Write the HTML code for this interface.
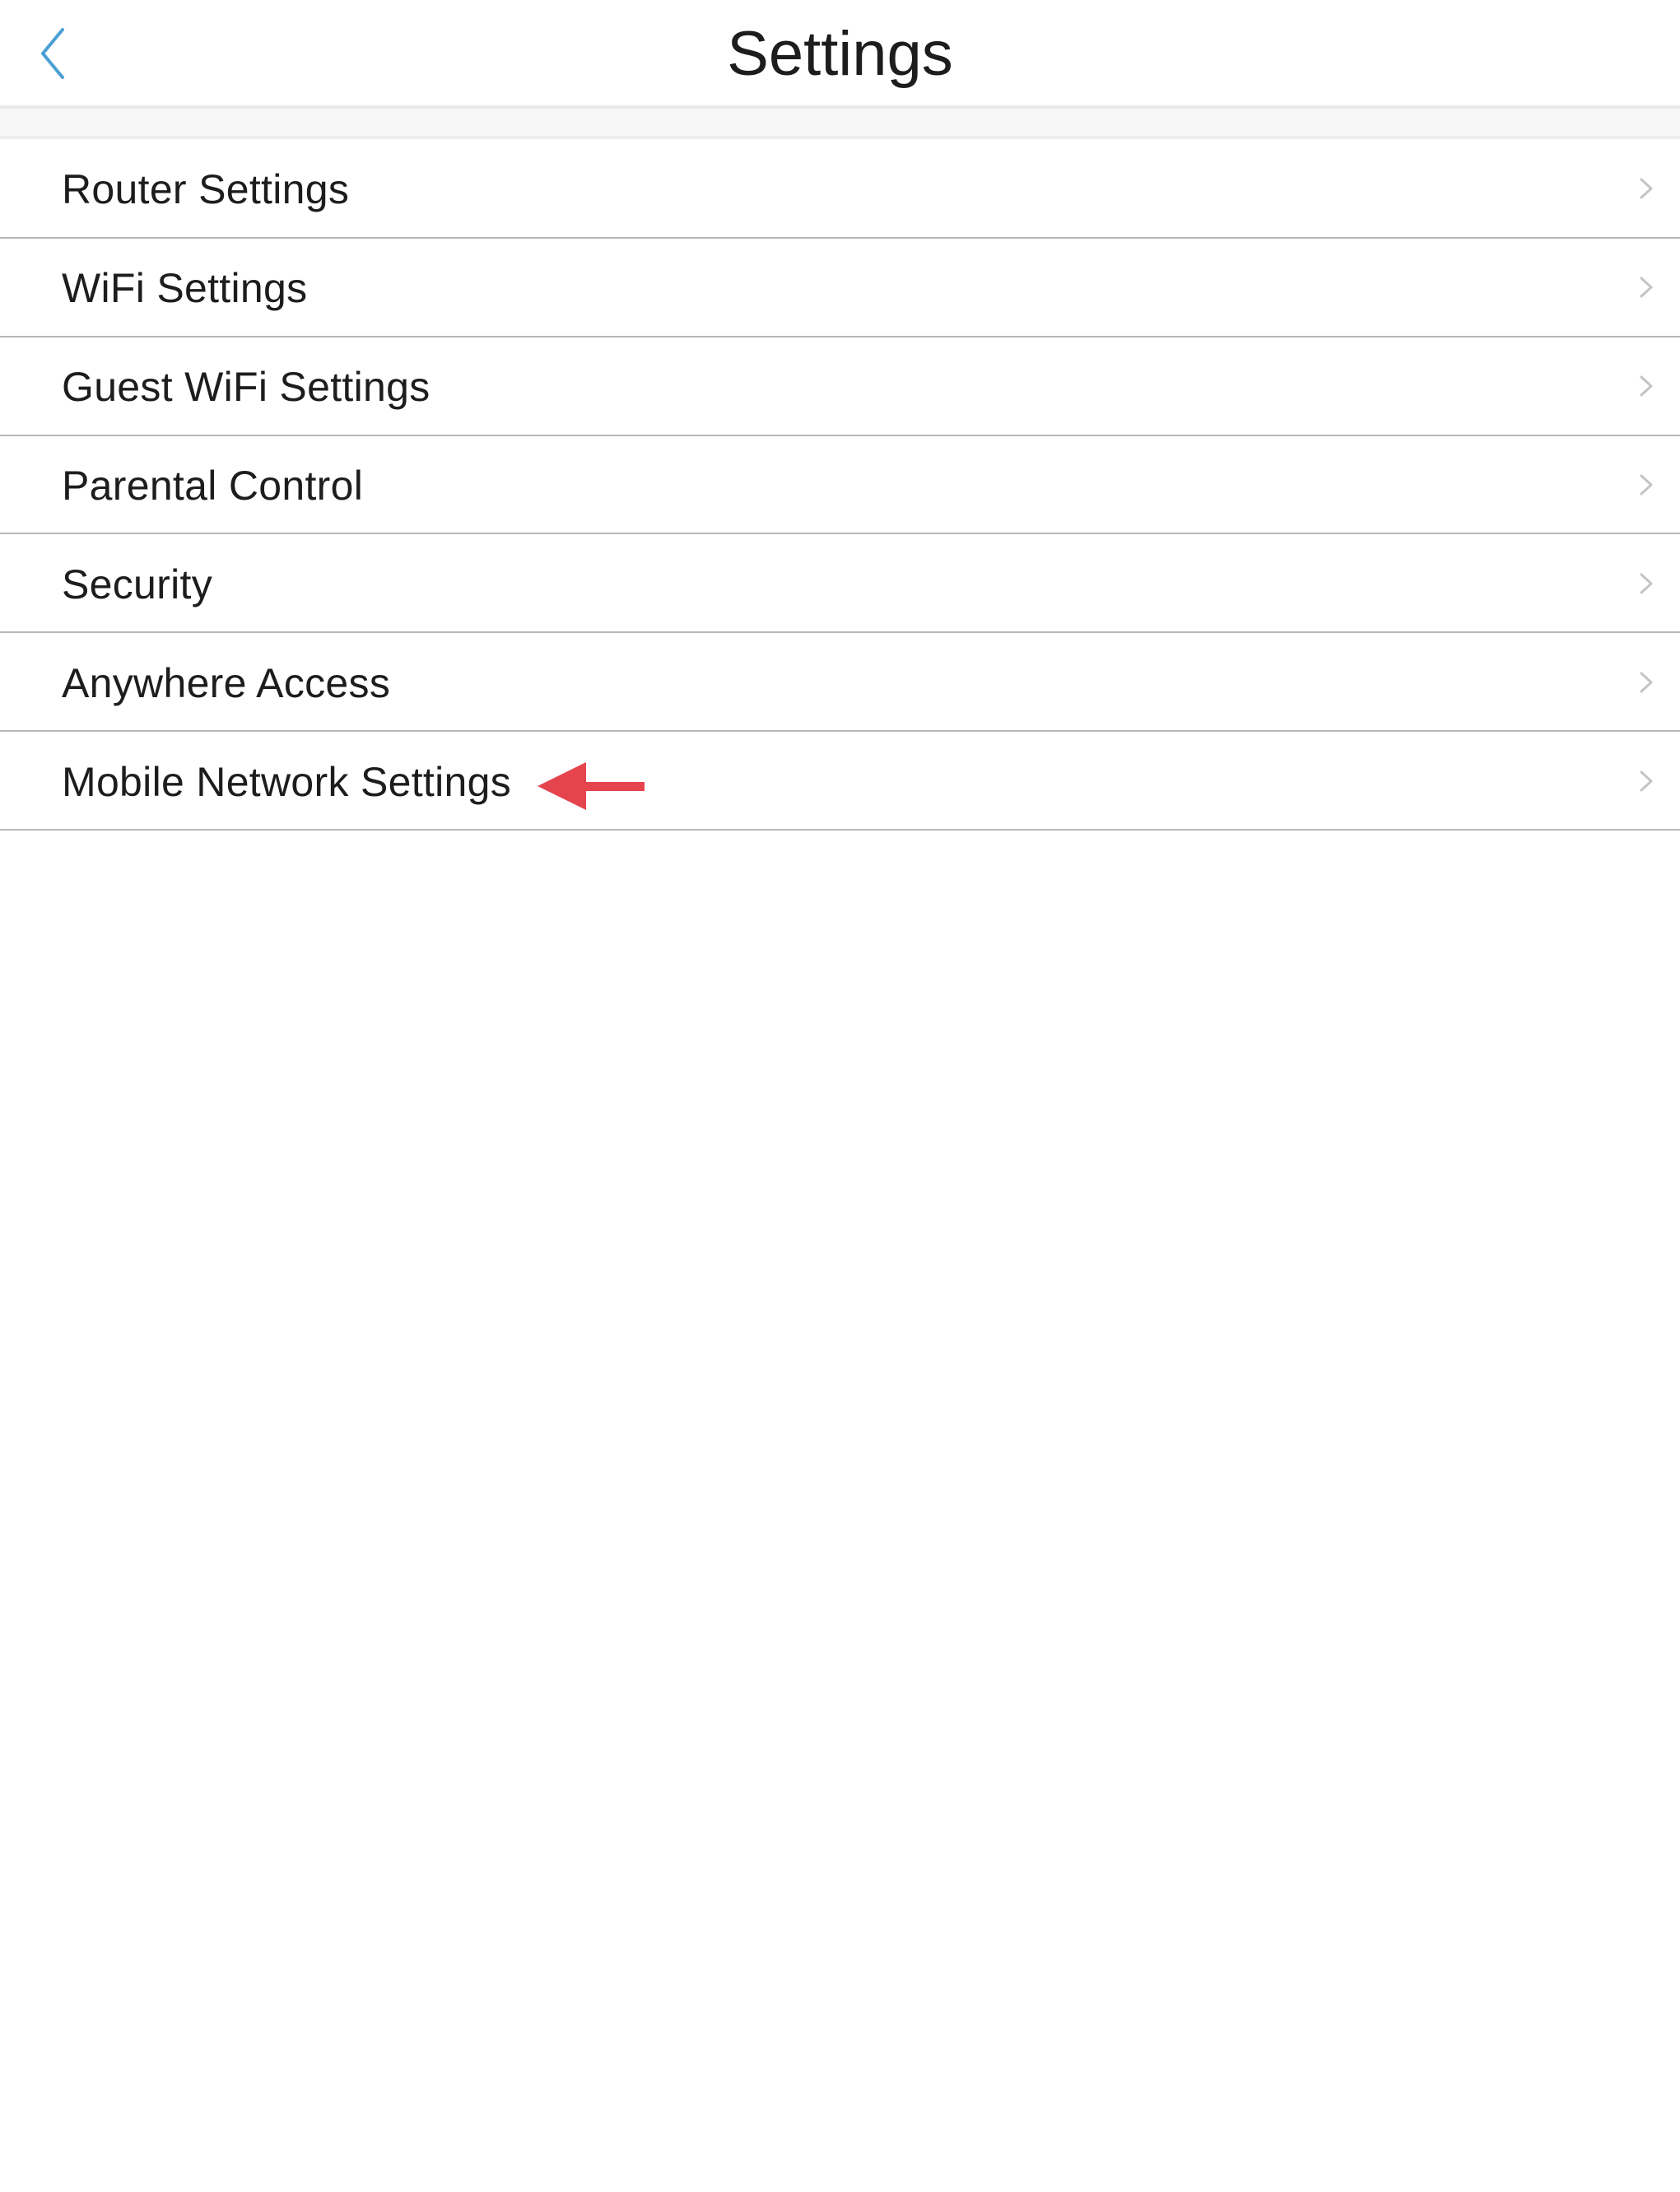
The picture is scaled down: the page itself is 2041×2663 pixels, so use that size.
<!DOCTYPE html>
<html><head><meta charset="utf-8"><style>
body{margin:0;width:2041px;height:2663px;background:#fff;position:relative;font-family:"Liberation Sans",sans-serif;color:#1d1d1f;overflow:hidden}
.t{position:absolute;white-space:nowrap}
.line{position:absolute;left:0;width:2041px;height:2px;background:#b8b8b8}
.row{position:absolute;left:75px;font-size:50px;line-height:50px;letter-spacing:0.3px}
</style></head><body>
<div class="t" style="left:0;width:2041px;text-align:center;top:28px;font-size:76px;line-height:76px">Settings</div>
<svg style="position:absolute;left:44px;top:30px" width="46" height="70"><polyline points="32,6 8,35 32,64" fill="none" stroke="#4a9fd4" stroke-width="4" stroke-linecap="round" stroke-linejoin="round"/></svg>
<div style="position:absolute;left:0;top:128px;width:2041px;height:4px;background:#e9e9eb"></div>
<div style="position:absolute;left:0;top:132px;width:2041px;height:33px;background:#f7f7f8"></div>
<div style="position:absolute;left:0;top:165px;width:2041px;height:4px;background:#ececee"></div>
<div class="line" style="top:288px"></div>
<div class="line" style="top:408px"></div>
<div class="line" style="top:528px"></div>
<div class="line" style="top:647px"></div>
<div class="line" style="top:767px"></div>
<div class="line" style="top:887px"></div>
<div class="line" style="top:1007px"></div>
<div class="row t" style="top:205px">Router Settings</div>
<div class="row t" style="top:325px">WiFi Settings</div>
<div class="row t" style="top:445px">Guest WiFi Settings</div>
<div class="row t" style="top:565px">Parental Control</div>
<div class="row t" style="top:685px">Security</div>
<div class="row t" style="top:805px">Anywhere Access</div>
<div class="row t" style="top:925px">Mobile Network Settings</div>
<svg style="position:absolute;left:0;top:0" width="2041" height="1100">
<g fill="none" stroke="#c4c4c6" stroke-width="3" stroke-linecap="round" stroke-linejoin="round">
<polyline points="1994,218 2006,229 1994,240"/>
<polyline points="1994,338 2006,349 1994,360"/>
<polyline points="1994,458 2006,469 1994,480"/>
<polyline points="1994,578 2006,589 1994,600"/>
<polyline points="1994,698 2006,709 1994,720"/>
<polyline points="1994,818 2006,829 1994,840"/>
<polyline points="1994,938 2006,949 1994,960"/>
</g>
<polygon points="653,955 712,926 712,950 783,950 783,961 712,961 712,984" fill="#e5444d"/>
</svg>
</body></html>
